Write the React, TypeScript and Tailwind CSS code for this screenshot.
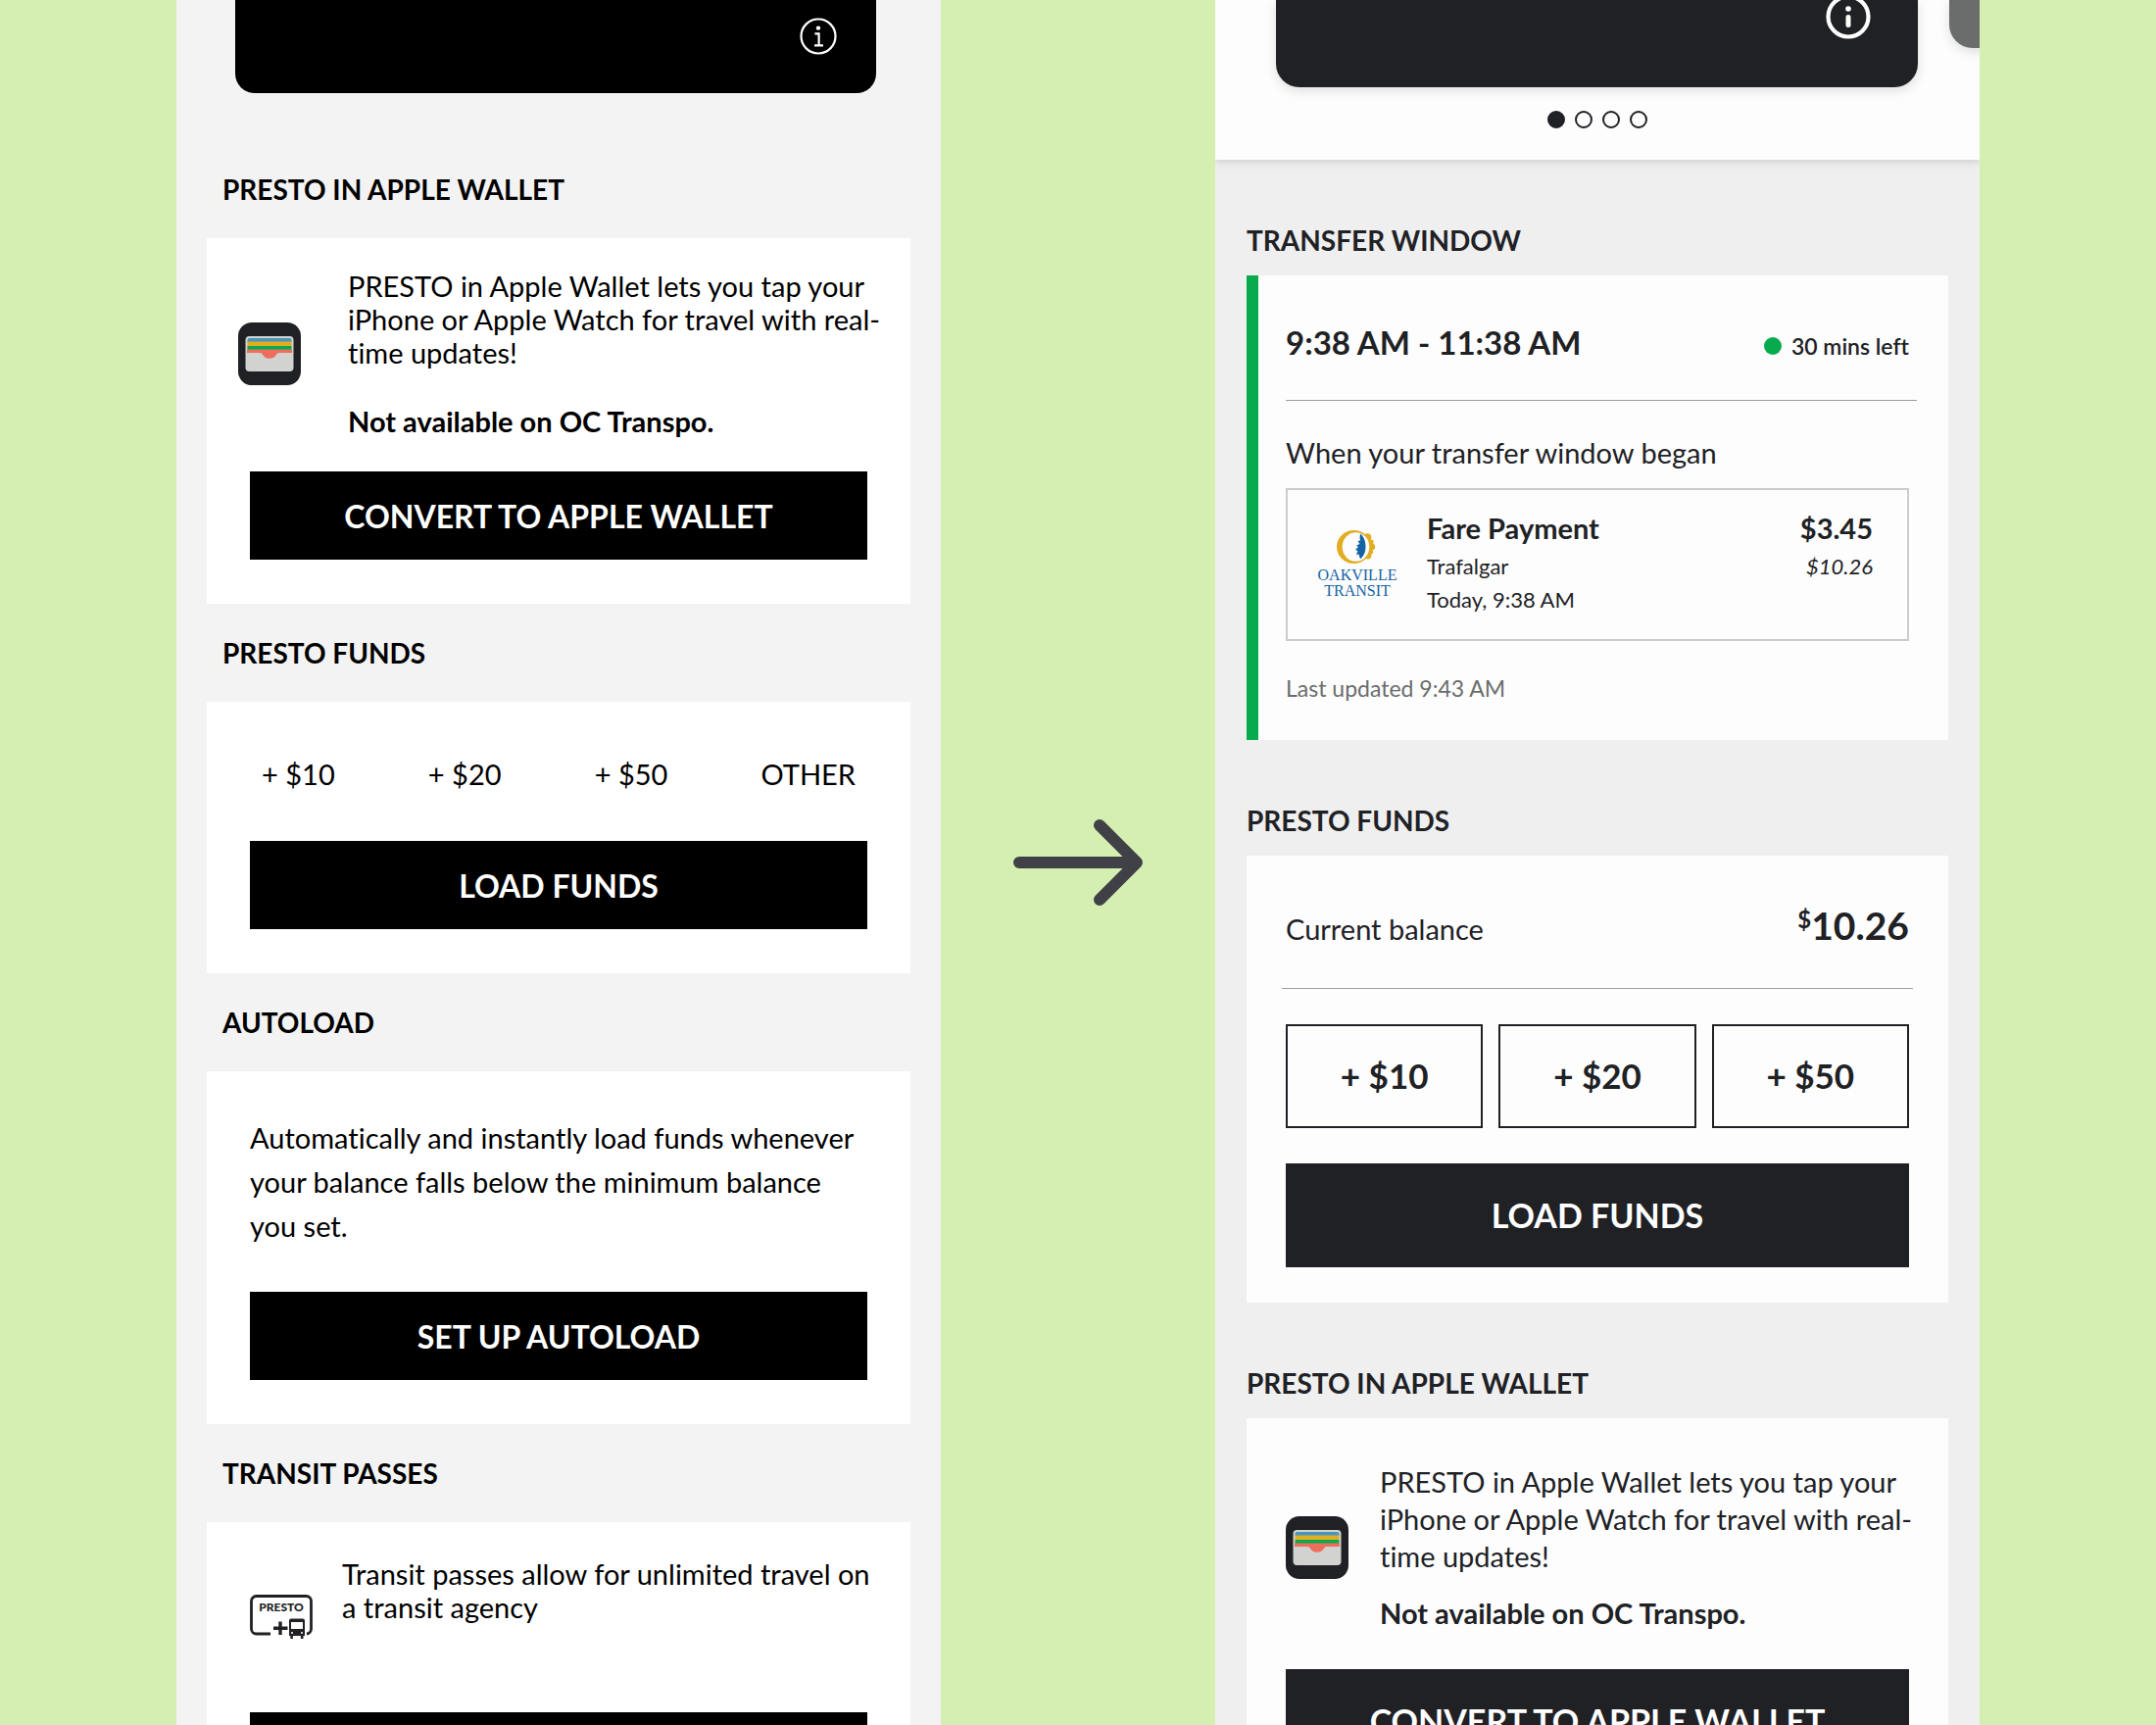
import React from "react";

function InfoSerif() {
  return (
    <svg viewBox="0 0 38 38" className="size-[38px]" fill="none" stroke="#fff">
      <circle cx="19" cy="19" r="17.5" strokeWidth="2.2" />
      <circle cx="19" cy="10.6" r="2.2" fill="#fff" stroke="none" />
      <path d="M15.4 16.4H19.6V28M15 28.4H24" strokeWidth="2.2" />
    </svg>
  );
}

function InfoRound() {
  return (
    <svg viewBox="0 0 46 46" className="size-[46px]" fill="none" stroke="#fff">
      <circle cx="23" cy="23" r="20.5" strokeWidth="4.2" />
      <circle cx="23" cy="15" r="2.8" fill="#fff" stroke="none" />
      <path d="M23 23.5V31.5" strokeWidth="5" strokeLinecap="round" />
    </svg>
  );
}

function WalletIcon() {
  return (
    <svg viewBox="0 0 64 64" className="size-16 shrink-0" aria-label="Apple Wallet" role="img">
      <rect width="64" height="64" rx="14" fill="#202125" />
      <rect x="7.5" y="14" width="49" height="36" rx="4" fill="#d2d3d0" />
      <path d="M9.500 20V18a2 2 0 0 1 2-2h41a2 2 0 0 1 2 2v2z" fill="#4895bd" />
      <rect x="9.500" y="19.500" width="45" height="5" fill="#e1ad22" />
      <rect x="9.500" y="24" width="45" height="4" fill="#07ab4d" />
      <path d="M9 27.500H55V31H42c-2 0-2.500 1-3.500 2.600-1.500 2.400-3.500 3.200-6.500 3.200s-5-.8-6.500-3.200C24.500 32 24 31 22 31H9z" fill="#ee6e5d" />
    </svg>
  );
}

function PassIcon() {
  return (
    <svg viewBox="0 0 64 46" className="h-[46px] w-16 shrink-0" aria-label="Presto transit pass" role="img">
      <path d="M21 40H6.500a5 5 0 0 1-5-5V6.500a5 5 0 0 1 5-5h51a5 5 0 0 1 5 5V35a5 5 0 0 1-4.500 5" fill="none" stroke="#202125" strokeWidth="2.800" />
      <text x="32" y="17" textAnchor="middle" className="fill-[#202125] text-[12px] font-black">PRESTO</text>
      <path d="M31 27.500V41M24 34.300H38.500" stroke="#202125" strokeWidth="3.400" />
      <path d="M42 24.500h12a2 2 0 0 1 2 2V42h-1.500v3h-2.600v-3h-8v3h-2.600v-3H40V26.500a2 2 0 0 1 2-2z" fill="#202125" />
      <path d="M42 28h12v7H42z" fill="#fff" />
      <circle cx="43" cy="39" r="1" fill="#fff" />
      <circle cx="53" cy="39" r="1" fill="#fff" />
    </svg>
  );
}

function OakvilleLogo() {
  return (
    <svg viewBox="0 0 82 70" className="h-[70px] w-[82px] shrink-0" aria-label="Oakville Transit" role="img">
      <g fill="#e1ad22">
        <circle cx="51.5" cy="8" r="3.800" />
        <circle cx="55" cy="13" r="2.600" />
        <circle cx="56" cy="18" r="3.200" />
        <circle cx="54.500" cy="23" r="2.600" />
        <circle cx="52" cy="27" r="3.400" />
        <ellipse cx="37.500" cy="18" rx="17.500" ry="17" />
      </g>
      <ellipse cx="39.500" cy="18" rx="13.800" ry="14.800" fill="#fdfdfd" />
      <path d="M44 4.500c4 3.500 5.500 8 5.500 13.500s-2 9.500-5.500 12.500l-1.500-5-2.500.5 1.500-4-2.500-1 3-3-2-1.500 3.500-1.500-2-3 2.500-.5-.5-3z" fill="#1463a5" />
      <text x="41" y="52" textAnchor="middle" className="fill-[#1463a5] font-['Liberation_Serif',serif] text-[16px]">OAKVILLE</text>
      <text x="41" y="68" textAnchor="middle" className="fill-[#1463a5] font-['Liberation_Serif',serif] text-[16px]">TRANSIT</text>
    </svg>
  );
}

function OldSection({ title, children }: { title: string; children: React.ReactNode }) {
  return (
    <section className="px-[31px]">
      <h2 className="px-4 py-8 text-[28px] leading-9 font-bold">{title}</h2>
      <div className="bg-white">{children}</div>
    </section>
  );
}

function OldButton({ children }: { children: React.ReactNode }) {
  return (
    <button type="button" className="h-[90px] w-full bg-black pt-0.5 text-[32px] leading-10 font-bold text-white">
      {children}
    </button>
  );
}

function NewSection({ title, children }: { title: string; children: React.ReactNode }) {
  return (
    <section className="px-8 pt-16">
      <h2 className="mb-[18px] text-[28px] leading-9 font-bold">{title}</h2>
      {children}
    </section>
  );
}

function NewButton({ children }: { children: React.ReactNode }) {
  return (
    <button type="button" className="h-[106px] w-full bg-[#202125] text-[34px] leading-10 font-bold text-white">
      {children}
    </button>
  );
}

function Before() {
  return (
    <main className="min-w-0 overflow-hidden bg-[#f3f3f3] text-[29px] text-black">
      <div className="mb-12 pr-[66px] pl-[60px]">
        <div className="flex h-[95px] justify-end rounded-b-[20px] bg-black pt-[18px] pr-10">
          <button type="button" aria-label="Card information" className="size-[38px]">
            <InfoSerif />
          </button>
        </div>
      </div>

      <OldSection title="PRESTO IN APPLE WALLET">
        <div className="pt-8 pb-[45px]">
          <div className="flex items-center gap-12 pr-6 pl-8 leading-[34px]">
            <WalletIcon />
            <div>
              <p>PRESTO in Apple Wallet lets you tap your iPhone or Apple Watch for travel with real-time updates!</p>
              <p className="mt-9 font-bold">Not available on OC Transpo.</p>
            </div>
          </div>
          <div className="mt-[34px] px-11">
            <OldButton>CONVERT TO APPLE WALLET</OldButton>
          </div>
        </div>
      </OldSection>

      <OldSection title="PRESTO FUNDS">
        <div className="px-11 pt-14 pb-[45px]">
          <div className="mb-[50px] flex justify-between px-3 leading-9">
            <button type="button">+ $10</button>
            <button type="button">+ $20</button>
            <button type="button">+ $50</button>
            <button type="button">OTHER</button>
          </div>
          <OldButton>LOAD FUNDS</OldButton>
        </div>
      </OldSection>

      <OldSection title="AUTOLOAD">
        <div className="px-11 pt-[45px] pb-[45px]">
          <p className="mb-[45px] leading-[45px]">
            Automatically and instantly load funds whenever your balance falls below the minimum balance you set.
          </p>
          <OldButton>SET UP AUTOLOAD</OldButton>
        </div>
      </OldSection>

      <OldSection title="TRANSIT PASSES">
        <div className="px-11 pt-9 pb-[45px]">
          <div className="mb-[74px] flex gap-[30px] leading-[34px]">
            <div className="pt-[38px]">
              <PassIcon />
            </div>
            <p className="-mr-4">Transit passes allow for unlimited travel on a transit agency</p>
          </div>
          <button type="button" aria-label="Transit passes" className="h-[90px] w-full bg-black" />
        </div>
      </OldSection>
    </main>
  );
}

function After() {
  return (
    <main className="min-w-0 overflow-hidden bg-[#efefef] text-[29px] text-[#202125]">
      <header className="bg-[#fdfdfd] pb-8 shadow-[0_2px_8px_rgba(0,0,0,0.15)]">
        <div className="flex items-start gap-8 overflow-hidden pb-6">
          <div className="ml-[62px] flex h-[89px] w-[84%] shrink-0 justify-end rounded-b-3xl bg-[#202125] pr-12 shadow-[0_4px_12px_rgba(0,0,0,0.12)]">
            <button type="button" aria-label="Card information" className="-mt-1.5 size-[46px]">
              <InfoRound />
            </button>
          </div>
          <div className="h-[49px] w-[84%] shrink-0 rounded-bl-3xl bg-[#6b6d6c] shadow-[0_4px_12px_rgba(0,0,0,0.12)]" />
        </div>
        <div className="flex justify-center gap-2.5">
          <button type="button" aria-label="Card 1" className="size-[18px] rounded-full border-2 border-[#202125] bg-[#202125]" />
          <button type="button" aria-label="Card 2" className="size-[18px] rounded-full border-2 border-[#202125]" />
          <button type="button" aria-label="Card 3" className="size-[18px] rounded-full border-2 border-[#202125]" />
          <button type="button" aria-label="Card 4" className="size-[18px] rounded-full border-2 border-[#202125]" />
        </div>
      </header>

      <NewSection title="TRANSFER WINDOW">
        <div className="border-l-12 border-[#07ab4d] bg-[#fdfdfd] pt-12 pr-10 pb-[38px] pl-7">
          <div className="flex items-baseline justify-between leading-10">
            <h3 className="text-[33px] font-bold">9:38 AM - 11:38 AM</h3>
            <p className="flex items-center gap-2.5 text-[23px] font-semibold">
              <span className="size-[18px] rounded-full bg-[#07ab4d]" />
              30 mins left
            </p>
          </div>
          <hr className="mt-[35px] -mr-2 mb-[35px] border-[#9d9d9d]" />
          <p className="leading-9">When your transfer window began</p>
          <div className="mt-[18px] flex items-center gap-[30px] border-2 border-[#cccccc] pt-[21px] pr-[35px] pb-[23px] pl-[30px]">
            <OakvilleLogo />
            <div className="flex-1">
              <div className="flex justify-between leading-9 font-bold">
                <h4>Fare Payment</h4>
                <p>$3.45</p>
              </div>
              <div className="mt-1 flex justify-between text-[22px] leading-[34px]">
                <p>Trafalgar</p>
                <p className="italic">$10.26</p>
              </div>
              <p className="text-[22px] leading-[34px]">Today, 9:38 AM</p>
            </div>
          </div>
          <p className="mt-[33px] text-[23px] leading-[30px] text-[#6b6d6c]">Last updated 9:43 AM</p>
        </div>
      </NewSection>

      <NewSection title="PRESTO FUNDS">
        <div className="bg-[#fdfdfd] px-10 pt-[47px] pb-9">
          <div className="flex items-baseline justify-between leading-[48px]">
            <p>Current balance</p>
            <p className="text-[39px] font-bold">
              <sup className="text-[24px]">$</sup>10.26
            </p>
          </div>
          <hr className="-mx-1 my-9 border-[#9d9d9d]" />
          <div className="mb-9 grid grid-cols-3 gap-4 text-[35px] leading-10 font-bold">
            <button type="button" className="h-[106px] border-2 border-[#202125] pb-0.5">+ $10</button>
            <button type="button" className="h-[106px] border-2 border-[#202125] pb-0.5">+ $20</button>
            <button type="button" className="h-[106px] border-2 border-[#202125] pb-0.5">+ $50</button>
          </div>
          <NewButton>LOAD FUNDS</NewButton>
        </div>
      </NewSection>

      <NewSection title="PRESTO IN APPLE WALLET">
        <div className="bg-[#fdfdfd] px-10 pt-[46px] pb-9">
          <div className="mb-[38px] flex items-center gap-8 leading-[38px]">
            <WalletIcon />
            <div className="-mr-4">
              <p>PRESTO in Apple Wallet lets you tap your iPhone or Apple Watch for travel with real-time updates!</p>
              <p className="mt-5 font-bold">Not available on OC Transpo.</p>
            </div>
          </div>
          <NewButton>CONVERT TO APPLE WALLET</NewButton>
        </div>
      </NewSection>
    </main>
  );
}

export default function App() {
  return (
    <div className="grid h-screen grid-cols-[780fr_280fr_780fr] overflow-hidden bg-[#d5efb3] px-45 font-['Lato',sans-serif] [font-variant-ligatures:none]">
      <Before />
      <div className="flex items-center justify-center">
        <svg viewBox="0 0 134 92" className="h-[92px] w-[134px]" fill="none" stroke="#404147" strokeWidth="12" strokeLinecap="round" strokeLinejoin="round" aria-hidden="true">
          <path d="M7 46H127M89 8L127 46L89 84" />
        </svg>
      </div>
      <After />
    </div>
  );
}
